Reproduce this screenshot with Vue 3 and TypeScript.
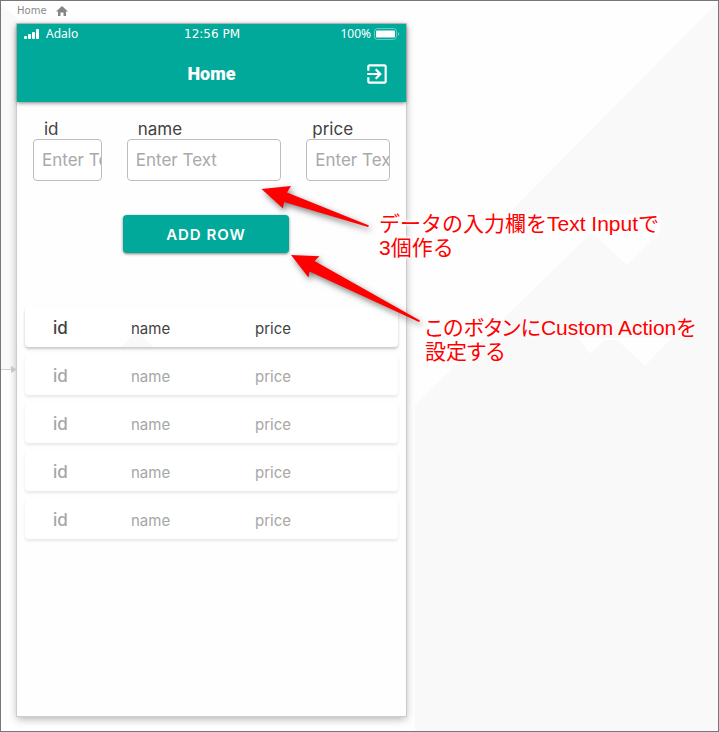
<script setup lang="ts">
import { ref } from 'vue'

interface Field {
  key: string
  label: string
}

interface Row {
  id: string
  name: string
  price: string
}

const fields: Field[] = [
  { key: 'id', label: 'id' },
  { key: 'name', label: 'name' },
  { key: 'price', label: 'price' },
]

const values = ref<Record<string, string>>({ id: '', name: '', price: '' })

const rows = ref<Row[]>(
  Array.from({ length: 5 }, () => ({ id: 'id', name: 'name', price: 'price' })),
)

function addRow(): void {
  rows.value.push({ ...(values.value as unknown as Row) })
}
</script>

<template>
  <main class="stage">
    <svg class="backdrop" width="719" height="732" viewBox="0 0 719 732" aria-hidden="true">
      <path
        d="M718 2V732H415V405L587 237L591 235L595 235L627 265L660 232V214H508Z"
        fill="#f9f9f9"
      />
      <path d="M578 338L591 354L604 340H617L645 366L672 338Z" fill="#fefefe" />
      <path d="M0 4L17 18V369H0Z" fill="#f9f9f9" />
      <path d="M0 369.500H11" stroke="#d0d0d0" />
    </svg>

    <div class="screen-name">
      <span>Home</span>
      <svg width="14" height="12" viewBox="0 0 14 12" aria-hidden="true">
        <path d="M7 1L13 6.500H11V11H8.500V7.500H5.500V11H3V6.500H1Z" fill="#858585" />
      </svg>
    </div>

    <section class="phone">
      <header class="app-bar">
        <div class="status">
          <span class="carrier">
            <svg width="16" height="11" viewBox="0 0 16 11" aria-hidden="true">
              <g fill="#fff">
                <rect x="0" y="7" width="3" height="3" rx="1" />
                <rect x="4" y="5" width="3" height="5" rx="1" />
                <rect x="8" y="3" width="3" height="7" rx="1" />
                <rect x="12" y="0" width="3" height="10" rx="1" />
              </g>
            </svg>
            Adalo
          </span>
          <span class="clock">12:56 PM</span>
          <span class="power">
            100%
            <svg width="26" height="12" viewBox="0 0 26 12" aria-hidden="true">
              <rect x="0.5" y="0.5" width="22" height="11" rx="3" fill="none" stroke="#fff" stroke-opacity=".4" />
              <rect x="2" y="2.500" width="19" height="7" rx="1" fill="#fff" />
              <path d="M24 4Q26 6 24 8Z" fill="#fff" fill-opacity=".6" />
            </svg>
          </span>
        </div>
        <div class="title-row">
          <h1>Home</h1>
          <button class="exit" type="button" aria-label="Log out">
            <svg width="26" height="26" viewBox="0 0 24 24" aria-hidden="true">
              <path
                fill="#fff"
                d="M10.090 15.590L11.500 17l5-5-5-5-1.410 1.410L12.670 11H3v2h9.670l-2.580 2.590zM19 3H5c-1.110 0-2 .9-2 2v4h2V5h14v14H5v-4H3v4c0 1.100.89 2 2 2h14c1.100 0 2-.9 2-2V5c0-1.100-.9-2-2-2z"
              />
            </svg>
          </button>
        </div>
      </header>

      <form @submit.prevent="addRow">
        <div class="fields">
          <div v-for="field in fields" :key="field.key" class="field">
            <label :for="field.key">{{ field.label }}</label>
            <input :id="field.key" v-model="values[field.key]" type="text" placeholder="Enter Text" />
          </div>
        </div>
        <button class="add" type="submit">ADD ROW</button>
      </form>

      <ul class="rows">
        <li v-for="(row, index) in rows" :key="index" :class="{ sample: index > 0 }">
          <svg v-if="index === 0" class="peak" width="32" height="14" viewBox="0 0 32 14" aria-hidden="true">
            <path d="M0 14L14 0H18L32 14Z" fill="#f9f9f9" />
          </svg>
          <strong>{{ row.id }}</strong>
          <span>{{ row.name }}</span>
          <span>{{ row.price }}</span>
        </li>
      </ul>
    </section>

    <svg class="arrows" width="719" height="732" viewBox="0 0 719 732" aria-hidden="true">
      <path d="M11 366L17 369.500L11 373Z" fill="#c8c8c8" />
      <g fill="#f00">
        <path d="M261.500 189L291 186L287 192.500L369 225.500L368 227L284 202L283 208.500Z" />
        <path d="M291 255L319.500 256.300L314.500 261L420 320.500L419 322L309.500 271.500L308.500 277.500Z" />
      </g>
    </svg>
    <p class="note note-inputs">データの入力欄をText Inputで<br />3個作る</p>
    <p class="note note-button">このボタンにCustom Actionを<br />設定する</p>
  </main>
</template>

<style>
body {
  margin: 0;
}
</style>

<style scoped>
* {
  box-sizing: border-box;
}

.stage {
  position: relative;
  display: flex;
  flex-direction: column;
  min-height: 100vh;
  padding: 0 16px 15px;
  overflow: hidden;
  border: 1px solid #777;
  background: #fefefe;
  font-family: Inter, 'Noto Sans CJK JP', sans-serif;
  color: #424242;
}

.backdrop,
.arrows {
  position: absolute;
  top: -1px;
  left: -1px;
}

.arrows {
  pointer-events: none;
}

.arrows g {
  filter: drop-shadow(2px 3px 3px rgba(0, 0, 0, 0.5));
}

.screen-name {
  position: relative;
  display: flex;
  align-items: center;
  gap: 8px;
  height: 23px;
  padding-bottom: 4px;
  font: 10px 'DejaVu Sans', sans-serif;
  color: #8a8a8a;
}

.phone {
  position: relative;
  flex: 1;
  width: 100%;
  max-width: 389px;
  background: #fefefe;
  box-shadow: 0 0 0 1px #ccc, 0 3px 8px rgba(0, 0, 0, 0.3);
}

.app-bar {
  height: 78px;
  background: #00a99a;
  color: #fff;
  box-shadow: 0 1px 4px rgba(0, 0, 0, 0.5);
}

.status {
  display: grid;
  grid-template-columns: 1fr auto 1fr;
  align-items: center;
  height: 20px;
  padding: 0 6px 0 7px;
  font: 12px/20px 'Noto Sans', sans-serif;
}

.carrier,
.power {
  display: flex;
  align-items: center;
  gap: 6px;
}

.power {
  justify-content: flex-end;
  gap: 3px;
}

.clock {
  font: 500 12px 'DejaVu Sans', sans-serif;
}

.title-row {
  display: grid;
  grid-template-columns: 26px 1fr 26px;
  align-items: center;
  height: 60px;
  padding: 0 16px;
}

h1 {
  grid-column: 2;
  margin: 0;
  font: 900 18px/32px Roboto, sans-serif;
  text-align: center;
}

.exit {
  padding: 0;
  border: 0;
  background: none;
  line-height: 0;
}

form {
  padding: 18px 16px 0;
}

.fields {
  display: grid;
  grid-template-columns: 69fr 155fr 84fr;
  gap: 25px;
}

.field {
  display: flex;
  flex-direction: column;
  min-width: 0;
}

label {
  padding-left: 11px;
  font-size: 17px;
  line-height: 19px;
}

.field:last-child label {
  padding-left: 6px;
}

input {
  width: 100%;
  height: 42px;
  padding: 0 0 0 8px;
  border: 1px solid #bdbdbd;
  border-radius: 4px;
  background: #fff;
  font: 17px Inter, sans-serif;
  color: #424242;
}

input::placeholder {
  color: #a9a9a9;
  opacity: 1;
}

.add {
  display: block;
  width: 166px;
  height: 38px;
  margin: 34px 0 0 90px;
  border: 0;
  border-radius: 4px;
  background: #00a99a;
  box-shadow: 0 1px 3px rgba(0, 0, 0, 0.5);
  font: 600 15px Inter, sans-serif;
  letter-spacing: 1px;
  color: #fff;
}

.rows {
  display: grid;
  gap: 8px;
  margin: 54px 8px 0;
  padding: 0;
  list-style: none;
}

li {
  position: relative;
  display: grid;
  grid-template-columns: 78px 124px 1fr;
  align-items: center;
  height: 40px;
  padding: 2px 0 0 28px;
  border-radius: 4px;
  background: #fff;
  box-shadow: 0 2px 3px rgba(0, 0, 0, 0.22);
}

li.sample {
  box-shadow: 0 2px 3px rgba(0, 0, 0, 0.09);
  color: #a6a6a6;
}

li strong {
  font-size: 17px;
  font-weight: 500;
}

li span {
  position: relative;
  font-size: 15px;
}

.peak {
  position: absolute;
  bottom: 0;
  left: 96px;
}

.note {
  position: absolute;
  margin: 0;
  font: 21px/24px 'Liberation Sans', 'Noto Sans CJK JP', sans-serif;
  white-space: nowrap;
  color: #f00;
  text-shadow: 0 0 2px #fff, 0 0 3px #fff, 0 0 4px #fff, 0 0 4px #fff;
}

.note-inputs {
  top: 211px;
  left: 378px;
}

.note-button {
  top: 315px;
  left: 424px;
  font-feature-settings: 'palt';
}
</style>
